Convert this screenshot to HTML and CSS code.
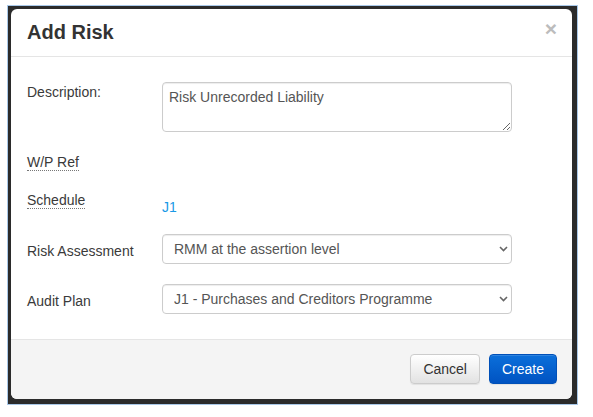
FILE: index.html
```html
<!DOCTYPE html>
<html>
<head>
<meta charset="utf-8">
<link rel="stylesheet" href="styles.css">
</head>
<body>
<div class="screen">
  <div class="modal">
    <div class="modal-header">
      <h4 class="title">Add Risk</h4>
      <button class="close" type="button">&times;</button>
    </div>
    <div class="modal-body">
      <div class="row row-desc">
        <label class="label">Description:</label>
        <textarea class="control textarea">Risk Unrecorded Liability</textarea>
      </div>
      <div class="row row-wp">
        <label class="label"><abbr class="abbr" title="Working paper reference">W/P Ref</abbr></label>
      </div>
      <div class="row row-sched">
        <label class="label"><abbr class="abbr" title="Schedule">Schedule</abbr></label>
        <a class="static-link" href="#">J1</a>
      </div>
      <div class="row row-select">
        <label class="label label-pad">Risk Assessment</label>
        <span class="select-wrap">
          <select class="control select"><option>RMM at the assertion level</option></select>
          <svg class="chev" width="9" height="6" viewBox="0 0 9 6"><path d="M1 1 L4.5 4.5 L8 1" fill="none" stroke="#666" stroke-width="1.6"/></svg>
        </span>
      </div>
      <div class="row row-select last">
        <label class="label label-pad">Audit Plan</label>
        <span class="select-wrap">
          <select class="control select"><option>J1 - Purchases and Creditors Programme</option></select>
          <svg class="chev" width="9" height="6" viewBox="0 0 9 6"><path d="M1 1 L4.5 4.5 L8 1" fill="none" stroke="#666" stroke-width="1.6"/></svg>
        </span>
      </div>
    </div>
    <div class="modal-footer">
      <button class="btn btn-default" type="button">Cancel</button>
      <button class="btn btn-primary" type="button">Create</button>
    </div>
  </div>
</div>
</body>
</html>
```

FILE: styles.css
```css
* { box-sizing: border-box; }
body {
  margin: 0;
  background: #fff;
  font-family: "Liberation Sans", Arial, sans-serif;
}
.screen {
  margin: 5px 0 0 7px;
  width: 571px;
  height: 400px;
  border: 1px solid #a9c8e8;
  background: #2b2b2b;
  padding: 3px 0 0 3px;
}
.modal {
  width: 561px;
  height: 390px;
  background: #fff;
  border-radius: 6px;
  display: flex;
  flex-direction: column;
  overflow: hidden;
}
.modal-header {
  height: 48px;
  padding: 0 15px 0 16px;
  display: flex;
  align-items: center;
  justify-content: space-between;
  border-bottom: 1px solid #e5e5e5;
}
.title {
  margin: 0;
  font-size: 20px;
  line-height: 27px;
  font-weight: bold;
  color: #333;
}
.close {
  border: 0;
  background: none;
  padding: 0;
  margin-top: -8px;
  font-family: "Liberation Sans", Arial, sans-serif;
  font-size: 21px;
  font-weight: bold;
  line-height: 1;
  color: #bcbcbc;
}
.modal-body {
  flex: 1;
  padding: 25px 0 0 16px;
}
.row {
  display: flex;
  align-items: flex-start;
}
.label {
  width: 135px;
  flex: none;
  font-size: 14px;
  line-height: 20px;
  color: #3a3a3a;
}
.label-pad { padding-top: 7px; }
.abbr {
  text-decoration: none;
  border-bottom: 1px dotted #777;
}
.row-desc { margin-bottom: 20px; }
.row-wp { height: 38px; }
.row-sched { height: 44px; }
.row-select { margin-bottom: 20px; }
.row-select.last { margin-bottom: 0; }
.control {
  width: 350px;
  border: 1px solid #ccc;
  border-radius: 4px;
  font-family: "Liberation Sans", Arial, sans-serif;
  font-size: 14px;
  color: #555;
  background-color: #fff;
  box-shadow: inset 0 1px 1px rgba(0,0,0,.075);
}
.textarea {
  height: 50px;
  padding: 4px 6px;
  line-height: 20px;
  resize: vertical;
  display: block;
}
.select-wrap {
  position: relative;
  display: block;
  width: 350px;
}
.select {
  display: block;
  height: 30px;
  padding: 0 24px 0 11px;
  line-height: 20px;
  -webkit-appearance: none;
  appearance: none;
}
.chev {
  position: absolute;
  right: 4px;
  top: 12px;
  pointer-events: none;
}
.static-link {
  padding-top: 7px;
  font-size: 14px;
  line-height: 20px;
  color: #1a9ae6;
  text-decoration: none;
}
.modal-footer {
  height: 60px;
  border-top: 1px solid #e5e5e5;
  background: #f4f4f4;
  padding: 14px 15px 0 0;
  display: flex;
  justify-content: flex-end;
  align-items: flex-start;
  gap: 9px;
}
.btn {
  height: 30px;
  padding: 0 12px;
  border-radius: 4px;
  font-family: "Liberation Sans", Arial, sans-serif;
  font-size: 14px;
  line-height: 28px;
}
.btn-default {
  color: #333;
  border: 1px solid #ccc;
  background: linear-gradient(#ffffff, #e2e2e2);
  box-shadow: inset 0 1px 0 rgba(255,255,255,.15), 0 1px 1px rgba(0,0,0,.075);
}
.btn-primary {
  color: #fff;
  border: 1px solid #0050b8;
  background: linear-gradient(#0b6fda, #0053c2);
  box-shadow: inset 0 1px 0 rgba(255,255,255,.15), 0 1px 1px rgba(0,0,0,.075);
}
```
